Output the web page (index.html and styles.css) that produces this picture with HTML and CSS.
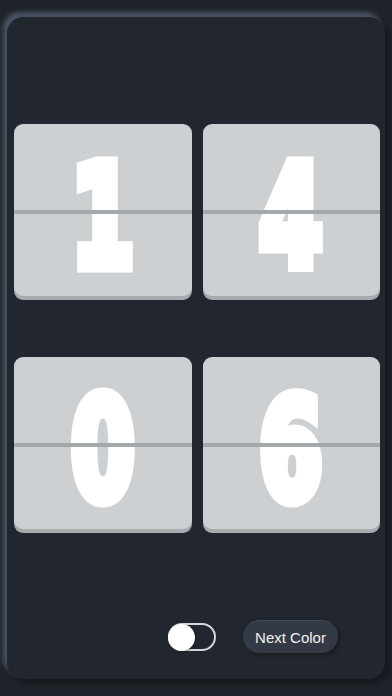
FILE: index.html
```html
<!DOCTYPE html>
<html lang="en">

<head>
    <meta charset="UTF-8">
    <title>Flip Clock</title>
    <link rel="stylesheet" href="styles.css">
</head>

<body>
    <div class="card">
        <!-- Цифры -->
        <div class="tiles">
            <div class="tile"><span class="digit">1</span></div>
            <div class="tile"><span class="digit">4</span></div>
            <div class="tile"><span class="digit">0</span></div>
            <div class="tile"><span class="digit">6</span></div>
        </div>

        <!-- Управление -->
        <div class="controls">
            <label class="switch">
                <span class="knob"></span>
            </label>
            <button class="next-button">Next Color</button>
        </div>
    </div>
</body>

</html>
```

FILE: styles.css
```css
html,
body {
    height: 100%;
    margin: 0;
    font-family: "Liberation Sans", Arial, sans-serif;
}

body {
    background: #1f2329;
    padding: 17px 7px;
    box-sizing: border-box;
}

.card {
    height: 100%;
    background: #22262e;
    border-radius: 16px;
    box-shadow: -4px -5px 5px #4a5366, 4px 4px 6px #15181c;
    display: flex;
    flex-direction: column;
    padding: 107px 5px 26px 7px;
    box-sizing: border-box;
}

.tiles {
    display: grid;
    grid-template-columns: 1fr 1fr;
    column-gap: 11px;
    row-gap: 61px;
}

.tile {
    position: relative;
    height: 172px;
    background: #cdd0d3;
    border-radius: 9px;
    box-shadow: 0 4px 0 #a7abae;
    display: flex;
    justify-content: center;
    align-items: center;
}

.tile::after {
    content: "";
    position: absolute;
    left: 0;
    right: 0;
    top: 86px;
    height: 4px;
    background: #a3a8ab;
}

.digit {
    display: block;
    margin-top: 16px;
    font-family: "DejaVu Sans Condensed", "DejaVu Sans", sans-serif;
    font-weight: bold;
    font-size: 140px;
    line-height: 130px;
    color: #fff;
    -webkit-text-stroke: 13px #fff;
    transform: scaleX(0.72);
}

.controls {
    margin-top: auto;
    display: flex;
    justify-content: flex-end;
    align-items: center;
    gap: 27px;
    padding-right: 42px;
}

.switch {
    position: relative;
    width: 48px;
    height: 28px;
    border: 2px solid #d4d7da;
    border-radius: 14px;
    background: #22262e;
    box-sizing: border-box;
    cursor: pointer;
}

.knob {
    position: absolute;
    left: -2px;
    top: -1px;
    width: 27px;
    height: 27px;
    border-radius: 50%;
    background: #fff;
    box-shadow: 1px 1px 2px rgba(0, 0, 0, 0.3);
}

.next-button {
    height: 33px;
    width: 95px;
    padding: 0;
    font-family: "Liberation Sans", Arial, sans-serif;
    font-size: 15px;
    color: #f2f2f2;
    background: #343a45;
    border: none;
    border-top: 1px solid #434a56;
    border-radius: 17px;
    box-shadow: 2px 2px 4px rgba(0, 0, 0, 0.3);
    cursor: pointer;
}
```
